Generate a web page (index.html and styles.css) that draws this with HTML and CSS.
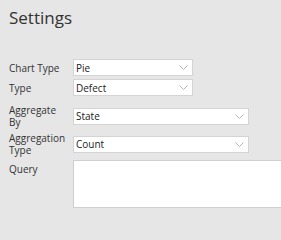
FILE: index.html
```html
<!DOCTYPE html>
<html lang="en">
<head>
    <meta charset="UTF-8">
    <title>Settings</title>
    <link rel="stylesheet" href="styles.css">
</head>
<body>

    <div class="panel">
        <h1>Settings</h1>

        <div class="form">
            <div class="row">
                <label class="label">Chart Type</label>
                <div class="select narrow">
                    <span>Pie</span>
                    <svg class="chevron" width="9" height="5" viewBox="0 0 9 5"><path d="M0.5 0.5 L4.5 4.5 L8.5 0.5" fill="none" stroke="#b4b4b4" stroke-width="1"/></svg>
                </div>
            </div>

            <div class="row">
                <label class="label">Type</label>
                <div class="select narrow">
                    <span>Defect</span>
                    <svg class="chevron" width="9" height="5" viewBox="0 0 9 5"><path d="M0.5 0.5 L4.5 4.5 L8.5 0.5" fill="none" stroke="#b4b4b4" stroke-width="1"/></svg>
                </div>
            </div>

            <div class="row two-line">
                <label class="label">Aggregate By</label>
                <div class="select wide">
                    <span>State</span>
                    <svg class="chevron" width="9" height="5" viewBox="0 0 9 5"><path d="M0.5 0.5 L4.5 4.5 L8.5 0.5" fill="none" stroke="#b4b4b4" stroke-width="1"/></svg>
                </div>
            </div>

            <div class="row two-line second">
                <label class="label">Aggregation Type</label>
                <div class="select wide">
                    <span>Count</span>
                    <svg class="chevron" width="9" height="5" viewBox="0 0 9 5"><path d="M0.5 0.5 L4.5 4.5 L8.5 0.5" fill="none" stroke="#b4b4b4" stroke-width="1"/></svg>
                </div>
            </div>

            <div class="row top">
                <label class="label query-label">Query</label>
                <textarea class="query"></textarea>
            </div>
        </div>
    </div>

</body>
</html>
```

FILE: styles.css
```css
* {
    box-sizing: border-box;
}

html, body {
    margin: 0;
    overflow: hidden;
}

body {
    font-family: 'Open Sans', sans-serif;
    background-color: #e6e6e6;
    color: #333;
    height: 240px;
}

.panel {
    padding: 6px 0 0 9px;
}

h1 {
    margin: 0;
    font-size: 17px;
    font-weight: normal;
    line-height: 23px;
    color: #333;
}

.form {
    margin-top: 30px;
    display: flex;
    flex-direction: column;
    gap: 3px;
}

.row {
    display: flex;
    align-items: center;
}

.row.two-line {
    padding-top: 5px;
}

.row.two-line.second {
    padding-top: 1px;
}

.row.top {
    align-items: flex-start;
    margin-top: 1px;
}

.label {
    width: 60px;
    margin-right: 4px;
    flex-shrink: 0;
    font-size: 10px;
    line-height: 12px;
    color: #333;
}

.query-label {
    margin-top: 3px;
}

.select {
    height: 17px;
    display: flex;
    align-items: center;
    justify-content: space-between;
    padding: 0 4px 0 2px;
    background-color: #fff;
    border: 1px solid #d4d4d4;
    font-size: 10px;
    color: #222;
}

.select.narrow {
    width: 120px;
}

.select.wide {
    width: 176px;
}

.chevron {
    display: block;
}

.query {
    width: 220px;
    height: 48px;
    flex-shrink: 0;
    margin: 0;
    padding: 2px;
    background-color: #fff;
    border: 1px solid #cfcfcf;
    resize: none;
    font-family: 'Open Sans', sans-serif;
}
```
